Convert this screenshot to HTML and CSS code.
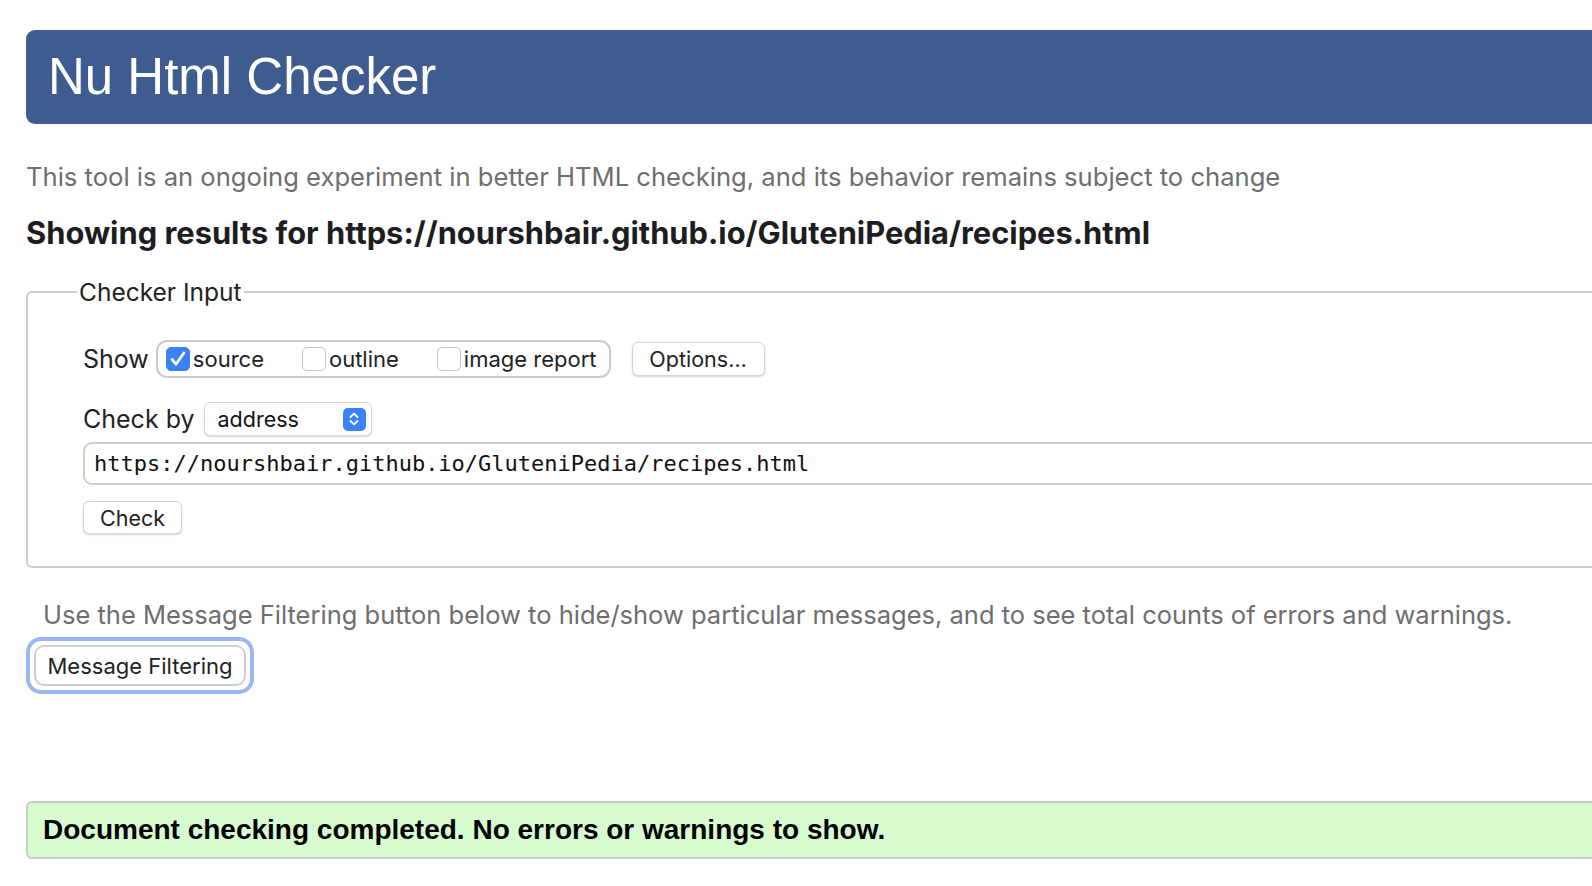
FILE: index.html
```html
<!DOCTYPE html>
<html lang="en">
<head>
<meta charset="utf-8">
<title>Nu Html Checker</title>
<link rel="stylesheet" href="styles.css">
</head>
<body>
<div class="page">
  <h1 class="banner">Nu Html Checker</h1>
  <p class="intro">This tool is an ongoing experiment in better HTML checking, and its behavior remains subject to change</p>
  <h2 class="results">Showing results for https://nourshbair.github.io/GluteniPedia/recipes.html</h2>

  <fieldset class="input-box">
    <legend class="legend">Checker Input</legend>
    <div class="row show-row">
      <span class="label">Show</span>
      <div class="check-group">
        <span class="check-item"><span class="cb cb-on"><svg viewBox="0 0 24 24" width="24" height="24"><path d="M6 12.5 L10 17.2 L17.8 6" fill="none" stroke="#fff" stroke-width="2.8" stroke-linecap="round" stroke-linejoin="round"/></svg></span>source</span>
        <span class="check-item"><span class="cb"></span>outline</span>
        <span class="check-item"><span class="cb"></span>image report</span>
      </div>
      <span class="btn btn-options">Options…</span>
    </div>
    <div class="row by-row">
      <span class="label">Check by</span>
      <span class="select">address<span class="sel-arrow"><svg viewBox="0 0 22 22" width="22" height="22"><path d="M7.5 9 L11 5.6 L14.5 9 M7.5 13 L11 16.4 L14.5 13" fill="none" stroke="#fff" stroke-width="1.8" stroke-linecap="round" stroke-linejoin="round"/></svg></span></span>
    </div>
    <div class="url">https://nourshbair.github.io/GluteniPedia/recipes.html</div>
    <span class="btn btn-check">Check</span>
  </fieldset>

  <p class="filter-note">Use the Message Filtering button below to hide/show particular messages, and to see total counts of errors and warnings.</p>
  <div class="focus-ring"><span class="btn btn-filter">Message Filtering</span></div>

  <div class="success">Document checking completed. No errors or warnings to show.</div>
</div>
</body>
</html>
```

FILE: styles.css
```css
html, body {
  margin: 0;
  padding: 0;
  background: #fff;
  overflow: hidden;
}
body {
  font-family: Inter, "Liberation Sans", sans-serif;
  color: #1d1d1f;
}
.page {
  width: 1700px;
  padding: 30px 0 0 26px;
}
.banner {
  margin: 0;
  height: 94px;
  box-sizing: border-box;
  background: #3e5c8f;
  color: #fff;
  border-radius: 9px;
  font-family: "Liberation Sans", Arial, sans-serif;
  font-weight: normal;
  font-size: 51px;
  line-height: 94px;
  padding-left: 22px;
}
.intro {
  margin: 37px 0 0;
  font-size: 25.6px;
  line-height: 32px;
  color: #6e6e6e;
}
.results {
  margin: 21px 0 0;
  font-size: 30.85px;
  line-height: 38px;
  font-weight: 700;
  color: #1d1d1f;
}
.input-box {
  margin: 25px 0 0;
  border: 2px solid #cfcfcf;
  border-radius: 6px;
  padding: 10px 0 32px 55px;
}
.legend {
  font-size: 24.5px;
  padding: 0 2px;
  margin-left: -6px;
  line-height: 30px;
  color: #222;
}
.row {
  display: flex;
  align-items: center;
}
.label {
  font-size: 25px;
  color: #222;
}
.show-row {
  margin-top: 23px;
}
.show-row .label {
  margin-right: 7px;
}
.check-group {
  display: flex;
  align-items: center;
  height: 38px;
  box-sizing: border-box;
  border: 2px solid #cbcbcb;
  border-radius: 11px;
  padding: 0 12px 0 8px;
  gap: 38px;
}
.check-item {
  display: flex;
  align-items: center;
  font-size: 22px;
  color: #222;
}
.cb {
  width: 24px;
  height: 24px;
  box-sizing: border-box;
  border: 1px solid #c4c4c4;
  border-radius: 5px;
  background: #fff;
  margin-right: 3px;
  display: inline-flex;
}
.cb-on {
  background: #3b82f6;
  border-color: #3b82f6;
}
.cb-on svg {
  margin: -1px;
}
.btn {
  display: inline-flex;
  align-items: center;
  justify-content: center;
  box-sizing: border-box;
  background: #fff;
  border: 1px solid #d6d6d6;
  border-radius: 6px;
  box-shadow: 0 1px 2px rgba(0, 0, 0, 0.18);
  font-size: 21.5px;
  color: #222;
}
.btn-options {
  margin-left: 21px;
  width: 133px;
  height: 34px;
}
.by-row {
  margin-top: 24px;
}
.by-row .label {
  margin-right: 9px;
}
.select {
  display: inline-flex;
  align-items: center;
  justify-content: space-between;
  box-sizing: border-box;
  width: 168px;
  height: 34px;
  padding: 0 5px 0 13px;
  background: #fff;
  border: 1px solid #d6d6d6;
  border-radius: 6px;
  box-shadow: 0 1px 2px rgba(0, 0, 0, 0.18);
  font-size: 21.5px;
  color: #111;
}
.sel-arrow {
  width: 23px;
  height: 23px;
  border-radius: 5px;
  background: #3b82f6;
  display: inline-flex;
  align-items: center;
  justify-content: center;
}
.url {
  margin-top: 6px;
  height: 43px;
  box-sizing: border-box;
  border: 2px solid #cfcfcf;
  border-radius: 9px;
  padding-left: 9px;
  font-family: "DejaVu Sans Mono", "Liberation Mono", monospace;
  font-size: 22px;
  line-height: 39px;
  color: #111;
}
.btn-check {
  margin-top: 16px;
  width: 99px;
  height: 33px;
}
.filter-note {
  margin: 31px 0 0 17px;
  font-size: 25.5px;
  line-height: 32px;
  color: #6e6e6e;
}
.focus-ring {
  display: inline-flex;
  margin-top: 6px;
  padding: 4px;
  border: 4px solid #9ab6f3;
  border-radius: 15px;
  background: #fff;
}
.btn-filter {
  width: 212px;
  height: 41px;
  border: 2px solid #cfcfcf;
  border-radius: 10px;
  box-shadow: none;
  font-size: 22px;
}
.success {
  margin-top: 107px;
  height: 58px;
  box-sizing: border-box;
  background: #d6fcd0;
  border: 2px solid #cbcbcb;
  border-radius: 6px;
  padding-left: 15px;
  font-family: "Liberation Sans", Arial, sans-serif;
  font-weight: 700;
  font-size: 28px;
  line-height: 54px;
  color: #000;
}
```
